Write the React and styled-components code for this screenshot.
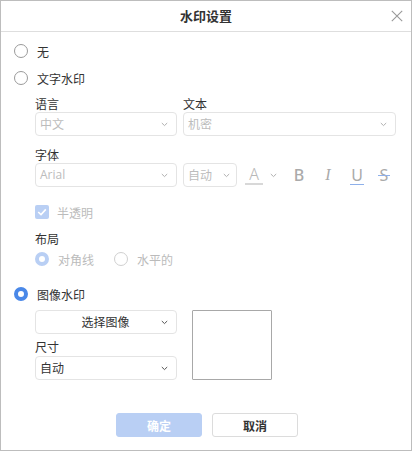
import React from 'react';
import styled, { createGlobalStyle, css } from 'styled-components';

const Global = createGlobalStyle`
  html, body { margin: 0; padding: 0; background: #fff; }
  body { font-family: "Noto Sans CJK SC", "Noto Sans", sans-serif; color: #333; }
  * { box-sizing: border-box; }
`;

const Dialog = styled.div`
  width: 412px;
  height: 451px;
  border: 1px solid #bdbdbd;
  background: #fff;
  display: flex;
  flex-direction: column;
`;

const Header = styled.div`
  height: 31px;
  border-bottom: 1px solid #dedede;
  display: grid;
  grid-template-columns: 1fr auto 1fr;
  align-items: center;
`;

const Title = styled.div`
  grid-column: 2;
  font-size: 13px;
  font-weight: 700;
  color: #333;
  line-height: 16px;
`;

const Close = styled.button`
  grid-column: 3;
  justify-self: end;
  margin-right: 8px;
  width: 12px;
  height: 12px;
  padding: 0;
  border: 0;
  background: none;
  display: flex;
  align-items: center;
  justify-content: center;
`;

const Body = styled.div`
  padding: 0 13px;
`;

const OptionRow = styled.div`
  display: flex;
  align-items: center;
  gap: 9px;
  height: 20px;
  margin-top: ${p => p.$mt || 0}px;
  font-size: 12px;
  color: ${p => (p.$disabled ? '#bbb' : '#333')};
`;

const Radio = styled.span`
  width: 14px;
  height: 14px;
  border-radius: 50%;
  flex: none;
  background: #fff;
  ${p =>
    p.$checked
      ? css`border: 4.5px solid ${p.$disabled ? '#b9cff4' : '#4a88e8'};`
      : css`border: 1px solid ${p.$disabled ? '#d0d0d0' : '#9a9a9a'};`}
`;

const Section = styled.div`
  padding-left: 21px;
`;

const FieldLabel = styled.div`
  font-size: 12px;
  line-height: 16px;
  color: #333;
  margin-top: ${p => p.$mt || 0}px;
  margin-bottom: ${p => p.$mb || 0}px;
`;

const LabelPair = styled.div`
  display: flex;
  font-size: 12px;
  line-height: 16px;
  color: #333;
  margin-top: ${p => p.$mt || 0}px;
`;

const LabelCell = styled.span`
  width: ${p => p.$w}px;
  flex: none;
`;

const Row = styled.div`
  display: flex;
  align-items: center;
  gap: ${p => p.$gap ?? 6}px;
`;

const SelectBox = styled.div`
  width: ${p => p.$w}px;
  height: 24px;
  border: 1px solid #e4e4e4;
  border-radius: 4px;
  background: #fff;
  display: flex;
  align-items: center;
  padding: 0 ${p => p.$pr ?? 8}px 0 ${p => (p.$center ? 14 : 4)}px;
  font-size: 12px;
  color: ${p => (p.$disabled ? '#bcbcbc' : '#333')};
  flex: none;
`;

const SelectText = styled.span`
  flex: 1;
  line-height: 16px;
  text-align: ${p => (p.$center ? 'center' : 'left')};
  font-family: ${p => (p.$latin ? '"Open Sans", "Noto Sans", sans-serif' : 'inherit')};
`;

const ToolItem = styled.span`
  width: ${p => p.$w}px;
  margin-left: ${p => p.$ml}px;
  height: 24px;
  display: flex;
  align-items: center;
  justify-content: center;
  position: relative;
  flex: none;
  color: #b0b0b0;
`;

const ColorA = styled.span`
  display: flex;
  flex-direction: column;
  align-items: center;
  width: 18px;
  margin-top: 2px;
  font-family: "Noto Sans", sans-serif;
  font-size: 16px;
  font-weight: 300;
  line-height: 15px;
  color: #b8b8b8;
  &::after {
    content: '';
    display: block;
    width: 18px;
    height: 2px;
    margin-top: 1px;
    background: #d8d8d8;
  }
`;

const Glyph = styled.span`
  font-size: 16px;
  line-height: 16px;
  font-family: ${p => (p.$serif ? '"Liberation Serif", serif' : '"Noto Sans", sans-serif')};
  font-style: ${p => (p.$italic ? 'italic' : 'normal')};
  font-weight: ${p => p.$weight || 400};
  color: #aaa;
  position: relative;
  ${p =>
    p.$under &&
    css`
      &::after {
        content: '';
        position: absolute;
        left: -1px;
        right: -1px;
        bottom: -2px;
        height: 1px;
        background: #8eb0ea;
      }
    `}
  ${p =>
    p.$strike &&
    css`
      &::after {
        content: '';
        position: absolute;
        left: -2px;
        right: -2px;
        top: 8px;
        height: 1px;
        background: #8eb0ea;
      }
    `}
`;

const Check = styled.span`
  width: 14px;
  height: 14px;
  border-radius: 2px;
  background: #b9cff4;
  display: flex;
  align-items: center;
  justify-content: center;
  flex: none;
`;

const CheckRow = styled(OptionRow)`
  height: 18px;
  gap: 8px;
`;

const RadioGroup = styled.div`
  display: flex;
  align-items: center;
  gap: 20px;
  height: 18px;
  margin-top: ${p => p.$mt || 0}px;
`;

const RadioItem = styled.label`
  display: flex;
  align-items: center;
  gap: 9px;
  font-size: 12px;
  color: #bbb;
`;

const ImageArea = styled.div`
  display: flex;
  gap: 15px;
  margin-top: 6px;
`;

const Column = styled.div`
  display: flex;
  flex-direction: column;
  width: 142px;
`;

const Preview = styled.div`
  width: 80px;
  height: 70px;
  border: 1px solid #a8a8a8;
  border-radius: 1px;
`;

const Footer = styled.div`
  margin-top: auto;
  padding: 0 0 13px 2px;
  display: flex;
  justify-content: center;
  gap: 10px;
`;

const Button = styled.button`
  width: 86px;
  height: 24px;
  border-radius: 3px;
  font-family: inherit;
  font-size: 12px;
  font-weight: 700;
  padding: 0;
  ${p =>
    p.$primary
      ? css`
          background: #b9cff4;
          border: 1px solid #b9cff4;
          color: #fff;
        `
      : css`
          background: #fff;
          border: 1px solid #dcdcdc;
          color: #333;
        `}
`;

const Chevron = ({ dark }) => (
  <svg width="7" height="5" viewBox="0 0 7 5" style={{ flex: 'none' }}>
    <polyline points="0.8,1 3.5,3.6 6.2,1" fill="none" stroke={dark ? '#555' : '#b0b0b0'} strokeWidth="1" />
  </svg>
);

const Select = ({ w, children, disabled, center, latin, pr }) => (
  <SelectBox $w={w} $disabled={disabled} $center={center} $pr={pr}>
    <SelectText $center={center} $latin={latin}>{children}</SelectText>
    <Chevron dark={!disabled} />
  </SelectBox>
);

export default function App() {
  return (
    <>
      <Global />
      <Dialog>
        <Header>
          <Title>水印设置</Title>
          <Close aria-label="关闭">
            <svg width="12" height="12" viewBox="0 0 12 12">
              <path d="M0.8 0.8 L11.2 11.2 M11.2 0.8 L0.8 11.2" stroke="#999" strokeWidth="1.1" fill="none" />
            </svg>
          </Close>
        </Header>
        <Body>
          <OptionRow $mt={9}>
            <Radio />
            <span>无</span>
          </OptionRow>
          <OptionRow $mt={7}>
            <Radio />
            <span>文字水印</span>
          </OptionRow>
          <Section>
            <LabelPair $mt={8}>
              <LabelCell $w={148}>语言</LabelCell>
              <span>文本</span>
            </LabelPair>
            <Row>
              <Select w={142} disabled>中文</Select>
              <Select w={213} disabled>机密</Select>
            </Row>
            <FieldLabel $mt={11}>字体</FieldLabel>
            <Row $gap={0}>
              <Select w={142} disabled latin>Arial</Select>
              <ToolItem $w={6} $ml={0} />
              <Select w={54} disabled pr={6}>自动</Select>
              <ToolItem $w={18} $ml={8}>
                <ColorA>A</ColorA>
              </ToolItem>
              <ToolItem $w={7} $ml={7}>
                <Chevron />
              </ToolItem>
              <ToolItem $w={14} $ml={15}>
                <Glyph $weight={500}>B</Glyph>
              </ToolItem>
              <ToolItem $w={14} $ml={15}>
                <Glyph $serif $italic>I</Glyph>
              </ToolItem>
              <ToolItem $w={14} $ml={15}>
                <Glyph $under>U</Glyph>
              </ToolItem>
              <ToolItem $w={14} $ml={13}>
                <Glyph $strike>S</Glyph>
              </ToolItem>
            </Row>
            <CheckRow $mt={16} $disabled>
              <Check>
                <svg width="10" height="8" viewBox="0 0 10 8">
                  <polyline points="1.2,4 4,6.6 8.8,1.4" fill="none" stroke="#fff" strokeWidth="1.6" />
                </svg>
              </Check>
              <span>半透明</span>
            </CheckRow>
            <FieldLabel $mt={10}>布局</FieldLabel>
            <RadioGroup $mt={3}>
              <RadioItem>
                <Radio $checked $disabled />
                <span>对角线</span>
              </RadioItem>
              <RadioItem>
                <Radio $disabled />
                <span>水平的</span>
              </RadioItem>
            </RadioGroup>
          </Section>
          <OptionRow $mt={16}>
            <Radio $checked />
            <span>图像水印</span>
          </OptionRow>
          <Section>
            <ImageArea>
              <Column>
                <Select w={142} center>选择图像</Select>
                <FieldLabel $mt={5} $mb={1}>尺寸</FieldLabel>
                <Select w={142}>自动</Select>
              </Column>
              <Preview />
            </ImageArea>
          </Section>
        </Body>
        <Footer>
          <Button $primary>确定</Button>
          <Button>取消</Button>
        </Footer>
      </Dialog>
    </>
  );
}
